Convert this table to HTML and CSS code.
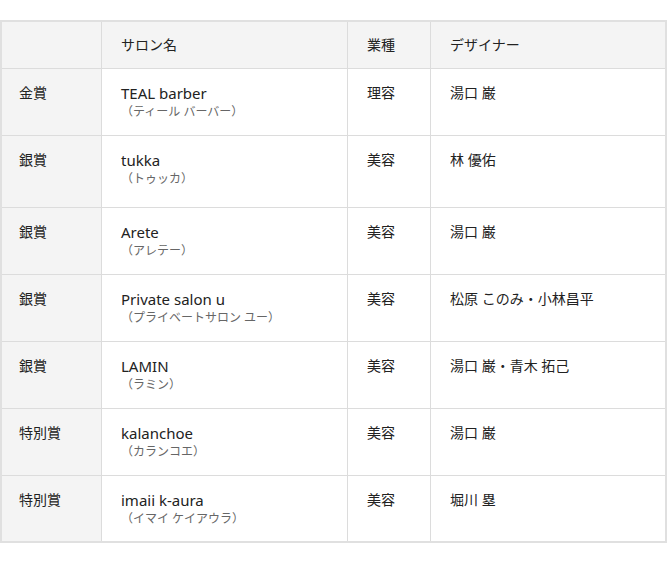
FILE: index.html
```html
<!DOCTYPE html>
<html lang="ja">
<head>
<meta charset="utf-8">
<title>受賞サロン</title>
<link rel="stylesheet" href="styles.css">
</head>
<body>
<table class="awards">
  <colgroup>
    <col class="c-award">
    <col class="c-salon">
    <col class="c-type">
    <col class="c-designer">
  </colgroup>
  <thead>
    <tr>
      <th class="side"></th>
      <th>サロン名</th>
      <th>業種</th>
      <th>デザイナー</th>
    </tr>
  </thead>
  <tbody>
    <tr>
      <th class="side">金賞</th>
      <td><div class="name">TEAL barber</div><div class="kana">（ティール バーバー）</div></td>
      <td>理容</td>
      <td>湯口 巌</td>
    </tr>
    <tr class="tall">
      <th class="side">銀賞</th>
      <td><div class="name">tukka</div><div class="kana">（トゥッカ）</div></td>
      <td>美容</td>
      <td>林 優佑</td>
    </tr>
    <tr>
      <th class="side">銀賞</th>
      <td><div class="name">Arete</div><div class="kana">（アレテー）</div></td>
      <td>美容</td>
      <td>湯口 巌</td>
    </tr>
    <tr>
      <th class="side">銀賞</th>
      <td><div class="name">Private salon u</div><div class="kana">（プライベートサロン ユー）</div></td>
      <td>美容</td>
      <td>松原 このみ・小林昌平</td>
    </tr>
    <tr>
      <th class="side">銀賞</th>
      <td><div class="name">LAMIN</div><div class="kana">（ラミン）</div></td>
      <td>美容</td>
      <td>湯口 巌・青木 拓己</td>
    </tr>
    <tr>
      <th class="side">特別賞</th>
      <td><div class="name">kalanchoe</div><div class="kana">（カランコエ）</div></td>
      <td>美容</td>
      <td>湯口 巌</td>
    </tr>
    <tr>
      <th class="side">特別賞</th>
      <td><div class="name">imaii k-aura</div><div class="kana">（イマイ ケイアウラ）</div></td>
      <td>美容</td>
      <td>堀川 塁</td>
    </tr>
  </tbody>
</table>
</body>
</html>
```

FILE: styles.css
```css
html, body {
  margin: 0;
  padding: 0;
  background: #fff;
}

body {
  padding-top: 20px;
  font-family: "Noto Sans", "Noto Sans CJK JP", sans-serif;
  font-size: 14px;
  color: #222;
}

.awards {
  box-sizing: border-box;
  width: 667px;
  table-layout: fixed;
  border-collapse: separate;
  border-spacing: 0;
  border: 2px solid #e0e0e0;
}

.c-award { width: 100px; }
.c-salon { width: 246px; }
.c-type { width: 83px; }
.c-designer { width: 234px; }

.awards th,
.awards td {
  border-right: 1px solid #dcdcdc;
  border-bottom: 1px solid #dcdcdc;
  text-align: left;
  vertical-align: top;
  font-weight: normal;
  line-height: 20px;
  padding: 14px 18px 14px 19px;
}

.awards th:last-child,
.awards td:last-child {
  border-right: 0;
}

.awards tbody tr:last-child td,
.awards tbody tr:last-child th {
  border-bottom: 0;
  padding-bottom: 13px;
}

.awards thead th {
  background: #f4f4f4;
  padding-top: 13px;
  padding-bottom: 13px;
  vertical-align: middle;
}

.awards th.side {
  background: #f4f4f4;
  padding-left: 17px;
}

.awards tr.tall td,
.awards tr.tall th {
  padding-bottom: 19px;
}

.name {
  font-size: 15px;
  line-height: 20px;
}

.kana {
  font-size: 12px;
  line-height: 18px;
  color: #666;
}
```
